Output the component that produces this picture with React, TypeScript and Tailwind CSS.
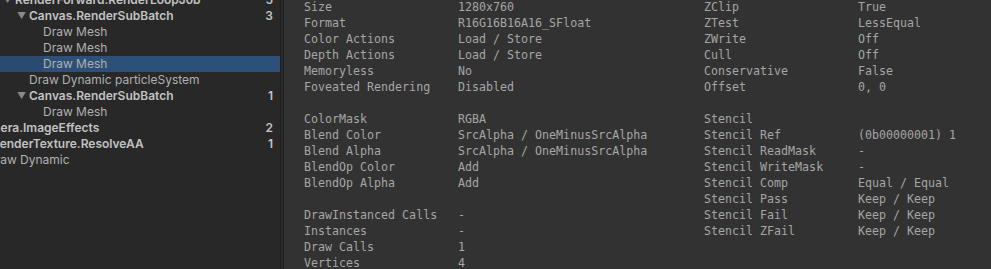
import React from "react";

type TreeRow = {
  name: string;
  count?: string;
  indent: number;
  bold?: boolean;
  arrow?: boolean;
  selected?: boolean;
};

const treeRows: TreeRow[] = [
  { name: "RenderForward.RenderLoopJob", count: "5", indent: 15, bold: true, arrow: true },
  { name: "Canvas.RenderSubBatch", count: "3", indent: 29, bold: true, arrow: true },
  { name: "Draw Mesh", indent: 43 },
  { name: "Draw Mesh", indent: 43 },
  { name: "Draw Mesh", indent: 43, selected: true },
  { name: "Draw Dynamic particleSystem", indent: 29 },
  { name: "Canvas.RenderSubBatch", count: "1", indent: 29, bold: true, arrow: true },
  { name: "Draw Mesh", indent: 43 },
  { name: "Camera.ImageEffects", count: "2", indent: -26, bold: true },
  { name: "RenderTexture.ResolveAA", count: "1", indent: -8, bold: true },
  { name: "Draw Dynamic", indent: -13 },
];

type Prop = [string, string] | null;

const leftProps: Prop[] = [
  ["Size", "1280x760"],
  ["Format", "R16G16B16A16_SFloat"],
  ["Color Actions", "Load / Store"],
  ["Depth Actions", "Load / Store"],
  ["Memoryless", "No"],
  ["Foveated Rendering", "Disabled"],
  null,
  ["ColorMask", "RGBA"],
  ["Blend Color", "SrcAlpha / OneMinusSrcAlpha"],
  ["Blend Alpha", "SrcAlpha / OneMinusSrcAlpha"],
  ["BlendOp Color", "Add"],
  ["BlendOp Alpha", "Add"],
  null,
  ["DrawInstanced Calls", "-"],
  ["Instances", "-"],
  ["Draw Calls", "1"],
  ["Vertices", "4"],
];

const rightProps: Prop[] = [
  ["ZClip", "True"],
  ["ZTest", "LessEqual"],
  ["ZWrite", "Off"],
  ["Cull", "Off"],
  ["Conservative", "False"],
  ["Offset", "0, 0"],
  null,
  ["Stencil", ""],
  ["Stencil Ref", "(0b00000001) 1"],
  ["Stencil ReadMask", "-"],
  ["Stencil WriteMask", "-"],
  ["Stencil Comp", "Equal / Equal"],
  ["Stencil Pass", "Keep / Keep"],
  ["Stencil Fail", "Keep / Keep"],
  ["Stencil ZFail", "Keep / Keep"],
];

const PropColumn: React.FC<{ rows: Prop[]; width: string }> = ({ rows, width }) => (
  <div className={`flex flex-col ${width}`}>
    {rows.map((row, i) =>
      row ? (
        <div key={i} className="flex h-[16px] shrink-0 items-center whitespace-pre">
          <span className="w-[154px] shrink-0">{row[0]}</span>
          <span>{row[1]}</span>
        </div>
      ) : (
        <div key={i} className="h-[16px] shrink-0" />
      ),
    )}
  </div>
);

export default function App() {
  return (
    <div className="flex h-[269px] w-[991px] overflow-hidden bg-[#323232]">
      <div
        className="relative w-[280px] shrink-0 overflow-hidden bg-[#282828] text-[12px] text-[#b4b4b4]"
        style={{ fontFamily: "Inter, 'Noto Sans', sans-serif" }}
      >
        <div className="mt-[-8px] flex flex-col">
          {treeRows.map((r, i) => (
            <div
              key={i}
              className={`relative flex h-[16px] shrink-0 items-center ${r.selected ? "bg-[#2a4a6f]" : ""}`}
            >
              {r.selected && (
                <div className="absolute top-0 bottom-0 left-[43px] right-0 bg-[#2d5079]" />
              )}
              {r.arrow && (
                <span
                  className="absolute text-[9px] text-[#8a8a8a]"
                  style={{ left: r.indent - 12 }}
                >
                  ▼
                </span>
              )}
              <span
                className={`relative whitespace-nowrap ${r.bold ? "font-semibold text-[#c2c2c2]" : "text-[#b0b0b0]"}`}
                style={{ marginLeft: r.indent }}
              >
                {r.name}
              </span>
              {r.count && (
                <span className="absolute right-[7px] font-semibold text-[#c2c2c2]">{r.count}</span>
              )}
            </div>
          ))}
        </div>
      </div>
      <div className="w-px shrink-0 bg-[#1d1d1d]" />
      <div className="w-[2px] shrink-0 bg-[#2a2a2a]" />
      <div className="w-px shrink-0 bg-[#1d1d1d]" />
      <div
        className="flex flex-1 pl-[20px] text-[11.65px] text-[#a6a6a6]"
        style={{ fontFamily: "'DejaVu Sans Mono', 'Liberation Mono', monospace" }}
      >
        <div className="flex">
          <PropColumn rows={leftProps} width="w-[400px]" />
          <PropColumn rows={rightProps} width="w-[287px]" />
        </div>
      </div>
    </div>
  );
}
